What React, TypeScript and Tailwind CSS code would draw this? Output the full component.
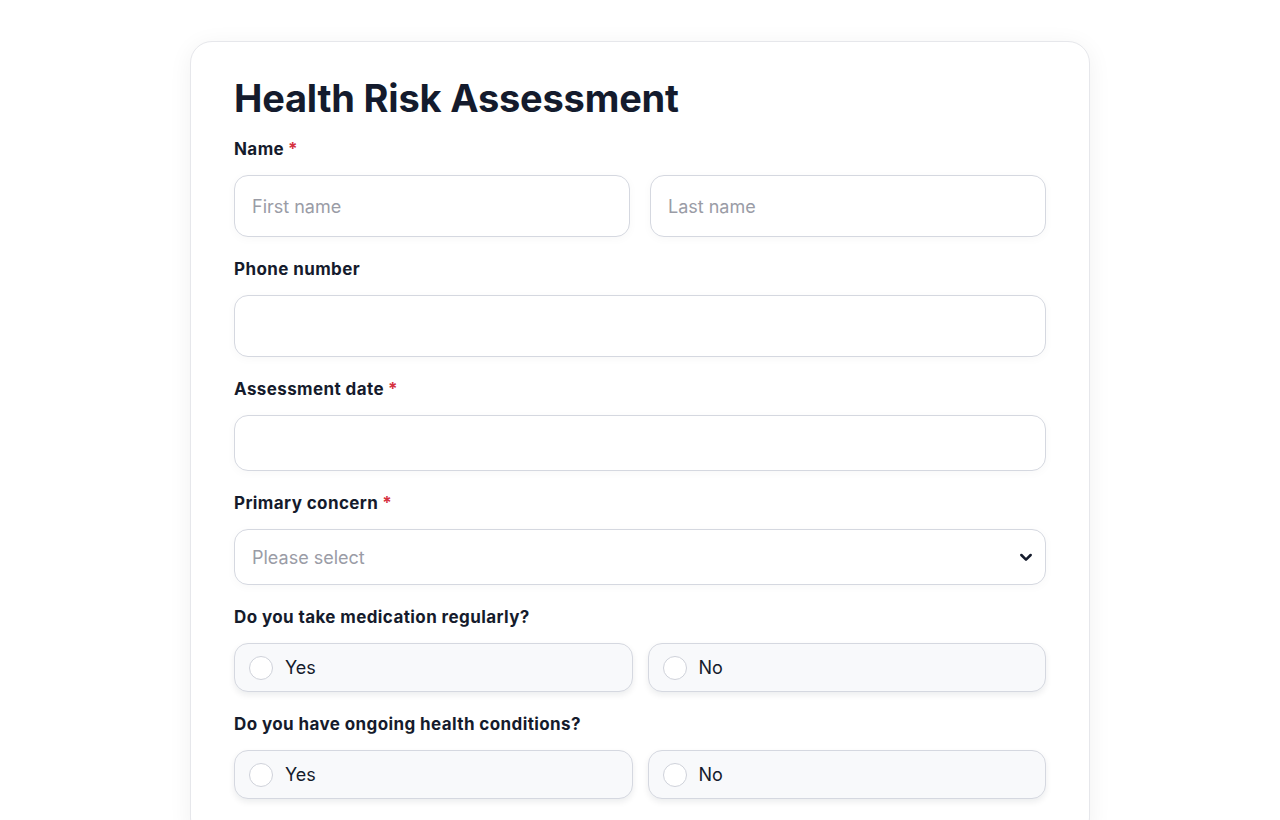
import React, { useState } from 'react';

const Label = ({ text, required }: { text: string; required?: boolean }) => (
  <label className="block text-[17px] leading-6 font-bold tracking-[0.4px] text-[#151b2c] mb-[14px]">
    {text}
    {required && <span className="text-[#d6323f] ml-1">*</span>}
  </label>
);

const inputBase =
  'w-full bg-white border border-[#d5d8e0] rounded-[14px] px-[17px] text-[18px] placeholder:text-[#9a9ca6] outline-none shadow-[0_2px_10px_rgba(15,23,42,0.03)]';

const RadioRow = ({ name, value, onChange }: { name: string; value: string; onChange: (v: string) => void }) => (
  <div className="grid grid-cols-2 gap-[15px]">
    {['Yes', 'No'].map((opt) => (
      <label
        key={opt}
        className="h-[49px] flex items-center gap-[12px] px-[14px] bg-[#f8f9fb] border border-[#d5d8e0] rounded-[14px] shadow-[0_3px_6px_rgba(15,23,42,0.08)] cursor-pointer"
      >
        <span className="w-[24px] h-[24px] rounded-full border border-[#cfd2da] bg-white flex items-center justify-center">
          {value === opt && <span className="w-[12px] h-[12px] rounded-full bg-[#151b2c]" />}
        </span>
        <input type="radio" name={name} className="hidden" checked={value === opt} onChange={() => onChange(opt)} />
        <span className="text-[18px] text-[#151b2c]">{opt}</span>
      </label>
    ))}
  </div>
);

const App = () => {
  const [meds, setMeds] = useState('');
  const [cond, setCond] = useState('');
  const [concern, setConcern] = useState('');

  return (
    <div className="min-h-screen bg-white pt-[41px] font-['Inter','Liberation_Sans',sans-serif]">
      <div className="w-[900px] mx-auto bg-white border border-[#e6e7eb] rounded-[22px] shadow-[0_4px_24px_rgba(15,23,42,0.06)] px-[43px] pt-[32px] pb-10">
        <h1 className="text-[38px] leading-[48px] font-bold text-[#141b2d] tracking-[-0.2px] mb-[15px]">Health Risk Assessment</h1>

        <div className="space-y-5">
          <div>
            <Label text="Name" required />
            <div className="grid grid-cols-2 gap-5">
              <input className={`${inputBase} text-[#151b2c] h-[62px]`} placeholder="First name" />
              <input className={`${inputBase} text-[#151b2c] h-[62px]`} placeholder="Last name" />
            </div>
          </div>

          <div>
            <Label text="Phone number" />
            <input className={`${inputBase} text-[#151b2c] h-[62px]`} />
          </div>

          <div>
            <Label text="Assessment date" required />
            <input className={`${inputBase} text-[#151b2c] h-[56px]`} />
          </div>

          <div>
            <Label text="Primary concern" required />
            <div className="relative">
              <select
                className={`${inputBase} h-[56px] appearance-none ${concern ? 'text-[#151b2c]' : 'text-[#9a9ca6]'}`}
                value={concern}
                onChange={(e) => setConcern(e.target.value)}
              >
                <option value="" disabled>
                  Please select
                </option>
                <option>Heart health</option>
                <option>Diabetes</option>
                <option>Weight</option>
              </select>
              <svg
                className="absolute right-[12px] top-1/2 -translate-y-1/2 pointer-events-none"
                width="16"
                height="16"
                viewBox="0 0 24 24"
                fill="none"
                stroke="#151b2c"
                strokeWidth="3.8"
                strokeLinecap="round"
                strokeLinejoin="round"
              >
                <path d="M5 9l7 7 7-7" />
              </svg>
            </div>
          </div>

          <div>
            <Label text="Do you take medication regularly?" />
            <RadioRow name="meds" value={meds} onChange={setMeds} />
          </div>

          <div>
            <Label text="Do you have ongoing health conditions?" />
            <RadioRow name="cond" value={cond} onChange={setCond} />
          </div>
        </div>
      </div>
    </div>
  );
};

export default App;
